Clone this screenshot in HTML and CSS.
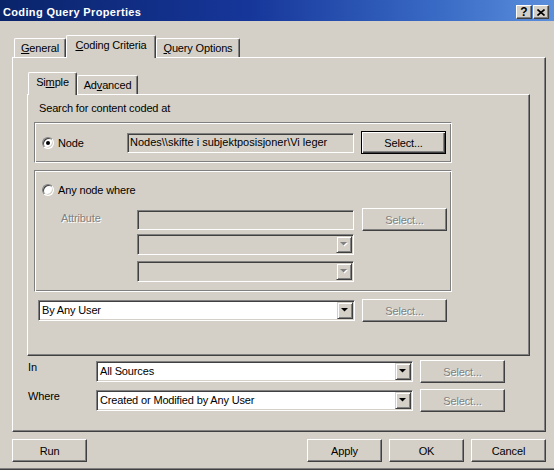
FILE: index.html
```html
<!DOCTYPE html>
<html>
<head>
<meta charset="utf-8">
<title>Coding Query Properties</title>
<link rel="stylesheet" href="styles.css">
</head>
<body>
<div class="window">
  <div class="titlebar">
    <span class="title">Coding Query Properties</span>
    <div class="capbtns">
      <span class="capbtn help">?</span>
      <span class="capbtn close"><svg width="8" height="7" viewBox="0 0 8 7"><path d="M0.5 0.5 L7.5 6.5 M7.5 0.5 L0.5 6.5" stroke="#000" stroke-width="1.6" fill="none"/></svg></span>
    </div>
  </div>

  <div class="tabstrip outer-tabs">
    <div class="tab w-general"><span><u>G</u>eneral</span></div>
    <div class="tab sel w-criteria"><span><u>C</u>oding Criteria</span></div>
    <div class="tab w-query"><span><u>Q</u>uery Options</span></div>
  </div>

  <div class="panel outer-panel">
    <div class="tabstrip inner-tabs">
      <div class="tab sel w-simple"><span>Si<u>m</u>ple</span></div>
      <div class="tab w-advanced"><span>Ad<u>v</u>anced</span></div>
    </div>

    <div class="panel inner-panel">
      <div class="caption">Search for content coded at</div>

      <div class="group node-group">
        <span class="radio"><span class="dot"></span></span>
        <span class="radio-label node-label">Node</span>
        <div class="field readonly node-field">Nodes\\skifte i subjektposisjoner\Vi leger</div>
        <button class="btn default select-btn node-select">Select...</button>
      </div>

      <div class="group any-group">
        <div class="radio-row">
          <span class="radio"></span>
          <span class="radio-label">Any node where</span>
        </div>
        <div class="attr-row">
          <span class="disabled-label attr-label">Attribute</span>
          <div class="field disabled attr-field"></div>
          <button class="btn disabled select-btn attr-select">Select...</button>
        </div>
        <div class="combo disabled attr-combo combo-1">
          <span class="combo-text"></span>
          <span class="drop"><svg width="8" height="5" viewBox="0 0 8 5"><polygon points="1,1 8,1 4.5,4.5" fill="#fff"/><polygon points="0,0 7,0 3.5,3.5" fill="#808080"/></svg></span>
        </div>
        <div class="combo disabled attr-combo combo-2">
          <span class="combo-text"></span>
          <span class="drop"><svg width="8" height="5" viewBox="0 0 8 5"><polygon points="1,1 8,1 4.5,4.5" fill="#fff"/><polygon points="0,0 7,0 3.5,3.5" fill="#808080"/></svg></span>
        </div>
      </div>

      <div class="user-row">
        <div class="combo wide-combo">
          <span class="combo-text">By Any User</span>
          <span class="drop"><svg width="8" height="5" viewBox="0 0 8 5"><polygon points="0,0 7,0 3.5,3.5" fill="#000"/></svg></span>
        </div>
        <button class="btn disabled select-btn">Select...</button>
      </div>
    </div>

    <div class="scope-row in-row">
      <span class="scope-label">In</span>
      <div class="combo wide-combo">
        <span class="combo-text">All Sources</span>
        <span class="drop"><svg width="8" height="5" viewBox="0 0 8 5"><polygon points="0,0 7,0 3.5,3.5" fill="#000"/></svg></span>
      </div>
      <button class="btn disabled select-btn">Select...</button>
    </div>

    <div class="scope-row where-row">
      <span class="scope-label">Where</span>
      <div class="combo wide-combo">
        <span class="combo-text">Created or Modified by Any User</span>
        <span class="drop"><svg width="8" height="5" viewBox="0 0 8 5"><polygon points="0,0 7,0 3.5,3.5" fill="#000"/></svg></span>
      </div>
      <button class="btn disabled select-btn">Select...</button>
    </div>
  </div>

  <div class="footer">
    <button class="btn action">Run</button>
    <button class="btn action apply">Apply</button>
    <button class="btn action">OK</button>
    <button class="btn action">Cancel</button>
  </div>
</div>
</body>
</html>
```

FILE: styles.css
```css
* {
  box-sizing: border-box;
}

html,
body {
  margin: 0;
  padding: 0;
  background: #d4d0c8;
}

body {
  font-family: "Liberation Sans", Arial, sans-serif;
  font-size: 11px;
  letter-spacing: -0.15px;
  color: #000;
}

.window {
  width: 554px;
  height: 470px;
  background: #d4d0c8;
  display: flex;
  flex-direction: column;
  overflow: hidden;
  box-shadow: inset 0 -1px #404040, inset 0 -2px #808080;
}

/* ---------- title bar ---------- */
.titlebar {
  flex: none;
  height: 21px;
  display: flex;
  align-items: flex-start;
  padding-left: 3px;
  background: linear-gradient(90deg, #0a246a 0%, #16369a 45%, #3a6cc6 80%, #5b8fdc 100%);
  color: #fff;
  font-weight: bold;
}

.title {
  line-height: 14px;
  margin-top: 5px;
  letter-spacing: 0.35px;
  white-space: nowrap;
}

.capbtns {
  margin-left: auto;
  margin-right: 5px;
  margin-top: 5px;
  display: flex;
  gap: 1px;
}

.capbtn {
  width: 16px;
  height: 14px;
  background: #d4d0c8;
  border: 1px solid;
  border-color: #fff #404040 #404040 #fff;
  box-shadow: inset -1px -1px #808080;
  display: flex;
  align-items: center;
  justify-content: center;
  color: #000;
  font-weight: bold;
  font-size: 12px;
  letter-spacing: 0;
  line-height: 12px;
}

/* ---------- tabs ---------- */
.tabstrip {
  flex: none;
  display: flex;
  align-items: flex-end;
}

.outer-tabs {
  height: 22px;
  margin-top: 14px;
  padding-left: 14px;
}

.inner-tabs {
  height: 22px;
  margin-top: 14px;
  padding-left: 15px;
}

.tab {
  height: 19px;
  background: #d4d0c8;
  border-top: 1px solid #fff;
  border-left: 1px solid #fff;
  border-right: 1px solid #404040;
  box-shadow: inset -1px 0 #808080;
  border-radius: 2px 2px 0 0;
  padding-top: 2px;
  line-height: 14px;
  text-align: center;
  white-space: nowrap;
}

.tab.sel {
  height: 23px;
  margin-bottom: -1px;
  position: relative;
  z-index: 1;
}

.w-general { width: 52px; }
.w-criteria { width: 90px; }
.w-query { width: 84px; }
.w-simple { width: 49px; }
.w-advanced { width: 61px; }

/* ---------- panels ---------- */
.panel {
  background: #d4d0c8;
  border: 1px solid;
  border-color: #fff #404040 #404040 #fff;
  box-shadow: inset -1px -1px #808080;
}

.outer-panel {
  flex: none;
  margin-left: 12px;
  width: 534px;
  height: 375px;
  display: flex;
  flex-direction: column;
}

.inner-panel {
  flex: none;
  margin-left: 14px;
  width: 503px;
  height: 262px;
  display: flex;
  flex-direction: column;
}

.caption {
  margin-top: 6px;
  margin-left: 11px;
  height: 14px;
  line-height: 14px;
}

/* ---------- group boxes ---------- */
.group {
  flex: none;
  margin-left: 6px;
  width: 418px;
  border: 1px solid;
  border-color: #808080 #fff #fff #808080;
  box-shadow: inset 1px 1px #fff, inset -1px -1px #808080;
}

.node-group {
  margin-top: 7px;
  height: 41px;
  display: flex;
  align-items: center;
  padding-left: 7px;
}

.any-group {
  margin-top: 7px;
  height: 122px;
  display: flex;
  flex-direction: column;
  padding-left: 7px;
}

.radio-row {
  margin-top: 12px;
  height: 14px;
  display: flex;
  align-items: center;
}

.radio {
  flex: none;
  width: 12px;
  height: 12px;
  border-radius: 50%;
  border: 1px solid;
  border-color: #808080 #fff #fff #808080;
  background: #fff;
  box-shadow: inset 1px 1px #404040, inset -1px -1px #d4d0c8;
  display: flex;
  align-items: center;
  justify-content: center;
}

.dot {
  width: 4px;
  height: 4px;
  border-radius: 50%;
  background: #000;
}

.radio-label {
  margin-left: 4px;
  line-height: 14px;
  white-space: nowrap;
}

.node-label {
  width: 69px;
}

.attr-row {
  margin-top: 11px;
  height: 23px;
  display: flex;
  align-items: flex-start;
}

.disabled-label {
  color: #808080;
  text-shadow: 1px 1px #fff;
}

.attr-label {
  margin-left: 19px;
  width: 76px;
  margin-top: 3px;
  line-height: 14px;
}

.attr-field {
  margin-top: 2px;
  width: 217px;
}

.attr-select {
  margin-left: 8px;
}

.attr-combo {
  margin-left: 95px;
  width: 217px;
}

.combo-1 { margin-top: 3px; }
.combo-2 { margin-top: 6px; }

/* ---------- fields ---------- */
.field {
  flex: none;
  height: 20px;
  border: 1px solid;
  border-color: #808080 #fff #fff #808080;
  box-shadow: inset 1px 1px #404040, inset -1px -1px #d4d0c8;
  background: #fff;
  padding-left: 2px;
  line-height: 17px;
  white-space: nowrap;
  overflow: hidden;
}

.field.readonly,
.field.disabled {
  background: #d4d0c8;
}

.node-field {
  width: 227px;
  letter-spacing: 0;
}

.combo {
  flex: none;
  height: 21px;
  display: flex;
  border: 1px solid;
  border-color: #808080 #fff #fff #808080;
  box-shadow: inset 1px 1px #404040, inset -1px -1px #d4d0c8;
  background: #fff;
}

.combo.disabled {
  background: #d4d0c8;
}

.combo-text {
  flex: 1;
  padding-left: 3px;
  padding-top: 1px;
  line-height: 17px;
  white-space: nowrap;
  overflow: hidden;
}

.drop {
  flex: none;
  width: 16px;
  height: 17px;
  margin: 1px 1px 1px 0;
  background: #d4d0c8;
  border: 1px solid;
  border-color: #d4d0c8 #404040 #404040 #d4d0c8;
  box-shadow: inset 1px 1px #fff, inset -1px -1px #808080;
  display: flex;
  align-items: center;
  justify-content: center;
}

.drop svg {
  display: block;
}

.wide-combo {
  width: 317px;
  margin-top: 1px;
}

/* ---------- buttons ---------- */
.btn {
  flex: none;
  font-family: inherit;
  font-size: 11px;
  letter-spacing: inherit;
  color: #000;
  background: #d4d0c8;
  border: 1px solid;
  border-color: #fff #404040 #404040 #fff;
  box-shadow: inset -1px -1px #808080;
  padding: 0;
  height: 23px;
  line-height: 14px;
  text-align: center;
  border-radius: 0;
}

.btn.default {
  border-color: #000;
  box-shadow: inset 1px 1px #fff, inset -1px -1px #404040, inset -2px -2px #808080;
}

.btn.disabled {
  color: #808080;
  text-shadow: 1px 1px #fff;
}

.select-btn {
  width: 85px;
}

.node-select {
  margin-left: 7px;
}

/* ---------- rows ---------- */
.user-row {
  margin-top: 7px;
  margin-left: 10px;
  height: 23px;
  display: flex;
  align-items: flex-start;
  gap: 7px;
}

.scope-row {
  flex: none;
  height: 23px;
  padding-left: 15px;
  display: flex;
  align-items: flex-start;
}

.in-row {
  margin-top: 4px;
}

.where-row {
  margin-top: 6px;
}

.scope-label {
  width: 68px;
  line-height: 14px;
  margin-top: 0;
}

.scope-row .select-btn {
  margin-left: 7px;
}

/* ---------- footer ---------- */
.footer {
  flex: none;
  margin-top: 7px;
  height: 23px;
  display: flex;
  padding-left: 12px;
  padding-right: 8px;
  gap: 7px;
}

.action {
  width: 75px;
}

.apply {
  margin-left: auto;
}
```
